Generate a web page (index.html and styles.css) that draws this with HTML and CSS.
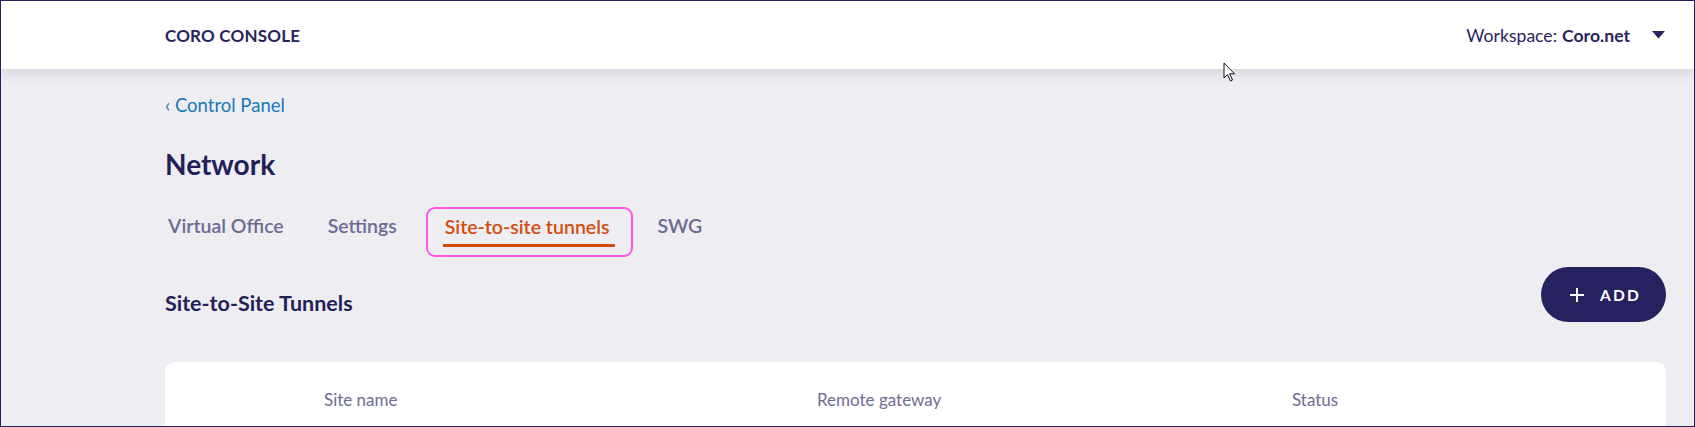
FILE: index.html
```html
<!DOCTYPE html>
<html lang="en">
<head>
<meta charset="utf-8">
<title>Coro Console - Network</title>
<link rel="stylesheet" href="styles.css">
</head>
<body>
<div class="frame">
  <header class="topbar">
    <div class="brand">CORO CONSOLE</div>
    <div class="workspace">
      <span class="ws-label">Workspace:</span>
      <span class="ws-name">Coro.net</span>
      <svg class="caret" width="13" height="8" viewBox="0 0 13 8"><path d="M0 0 H13 L6.5 7.5 Z" fill="#2a255e"/></svg>
    </div>
  </header>
  <svg class="cursor" width="14" height="20" viewBox="0 0 14 20"><path d="M1 1 V16 L4.5 12.5 L7.5 19 L9.5 18 L6.7 11.8 L11.5 11.8 Z" fill="#fff" stroke="#111" stroke-width="1"/></svg>
  <main class="content">
    <a class="back">‹ Control Panel</a>
    <h1 class="title">Network</h1>
    <nav class="tabs">
      <span class="tab tab-vo">Virtual Office</span>
      <span class="tab tab-settings">Settings</span>
      <span class="tab active"><span class="tab-text">Site-to-site tunnels</span></span>
      <span class="tab tab-swg">SWG</span>
    </nav>
    <div class="section-head">
      <h2 class="section-title">Site-to-Site Tunnels</h2>
      <button class="add-btn">
        <svg class="plus" width="14" height="14" viewBox="0 0 14 14"><path d="M7 0 V14 M0 7 H14" stroke="#fff" stroke-width="2"/></svg>
        <span>ADD</span>
      </button>
    </div>
    <div class="card">
      <div class="thead">
        <span class="th">Site name</span>
        <span class="th">Remote gateway</span>
        <span class="th">Status</span>
      </div>
    </div>
  </main>
</div>
</body>
</html>
```
FILE: styles.css
```css
html, body {
  margin: 0;
  padding: 0;
}
body {
  font-family: Lato, "Open Sans", sans-serif;
  background: #eeedf2;
}
.frame {
  position: relative;
  width: 1695px;
  height: 427px;
  box-sizing: border-box;
  border: 1px solid #25205a;
  overflow: hidden;
  background: #eeedf2;
}
.topbar {
  height: 68px;
  background: #fff;
  display: flex;
  align-items: center;
  justify-content: space-between;
  padding: 0 29px 0 164px;
  box-shadow: 0 2px 14px rgba(40, 40, 60, 0.16);
  position: relative;
  z-index: 1;
}
.brand {
  font-size: 17px;
  font-weight: 700;
  color: #28245a;
  letter-spacing: 0.2px;
}
.workspace {
  display: flex;
  align-items: center;
  font-size: 17.6px;
  color: #2a255e;
}
.ws-label { margin-right: 5px; }
.ws-name { font-weight: 700; }
.caret { margin-left: 22px; }
.cursor {
  position: absolute;
  left: 1222px;
  top: 61px;
  z-index: 2;
}
.content {
  padding: 26px 28px 0 164px;
}
.back {
  display: block;
  font-size: 18.5px;
  color: #1a78b9;
  line-height: 20px;
}
.title {
  margin: 32px 0 0;
  font-size: 28px;
  font-weight: 700;
  color: #231f58;
  line-height: 34px;
}
.tabs {
  display: flex;
  align-items: flex-start;
  margin-top: 26px;
  height: 50px;
}
.tab {
  font-size: 19.5px;
  font-weight: 600;
  color: #6d6a94;
  line-height: 22px;
  padding-top: 8px;
}
.tab-vo { margin-left: 3px; margin-right: 44px; }
.tab-settings { margin-right: 29px; }
.tab.active {
  color: #d44c0b;
  border: 2px solid #ff55ee;
  border-radius: 9px;
  height: 50px;
  box-sizing: border-box;
  padding: 7px 16px 8px 15px;
  margin-right: 24px;
}
.tab-text {
  display: block;
  border-bottom: 3px solid #d44c0b;
  padding: 0 6px 6px 2px;
}
.section-head {
  display: flex;
  align-items: flex-start;
  justify-content: space-between;
  margin-top: 10px;
}
.section-title {
  margin: 23px 0 0;
  font-size: 21.5px;
  line-height: 26px;
  font-weight: 700;
  color: #231f58;
}
.add-btn {
  width: 125px;
  height: 55px;
  border: none;
  border-radius: 28px;
  background: #26215f;
  color: #fff;
  font-family: Lato, sans-serif;
  font-size: 15.5px;
  font-weight: 700;
  letter-spacing: 2.2px;
  display: flex;
  align-items: center;
  justify-content: center;
  gap: 16px;
  padding: 0 0 0 4px;
}
.card {
  margin-top: 40px;
  background: #fff;
  border-radius: 9px;
  height: 120px;
}
.thead {
  display: grid;
  grid-template-columns: 493px 475px 1fr;
  padding-left: 159px;
  height: 74px;
  align-items: center;
}
.th {
  font-size: 17px;
  color: #6f6c92;
}
```
